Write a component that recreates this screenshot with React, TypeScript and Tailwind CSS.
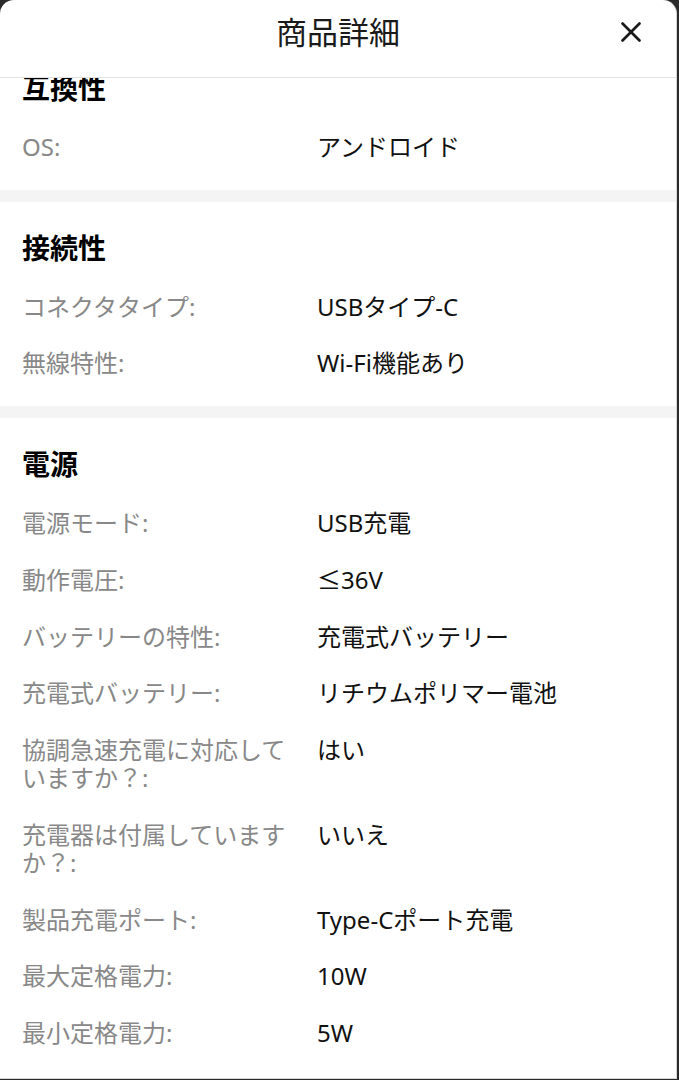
import { X } from "lucide-react";

type Row = { label: string; value: string };
type Section = { title: string; rows: Row[] };

const sections: Section[] = [
  { title: "互換性", rows: [{ label: "OS:", value: "アンドロイド" }] },
  {
    title: "接続性",
    rows: [
      { label: "コネクタタイプ:", value: "USBタイプ-C" },
      { label: "無線特性:", value: "Wi-Fi機能あり" },
    ],
  },
  {
    title: "電源",
    rows: [
      { label: "電源モード:", value: "USB充電" },
      { label: "動作電圧:", value: "≤36V" },
      { label: "バッテリーの特性:", value: "充電式バッテリー" },
      { label: "充電式バッテリー:", value: "リチウムポリマー電池" },
      { label: "協調急速充電に対応していますか？:", value: "はい" },
      { label: "充電器は付属していますか？:", value: "いいえ" },
      { label: "製品充電ポート:", value: "Type-Cポート充電" },
      { label: "最大定格電力:", value: "10W" },
      { label: "最小定格電力:", value: "5W" },
    ],
  },
];

export default function App() {
  return (
    <div
      className="h-[1080px] bg-[#2a2a2a] flex"
      style={{ fontFamily: '"Noto Sans", "Noto Sans CJK JP", sans-serif' }}
    >
      <div className="w-[677px] h-[1079px] bg-white rounded-t-[14px] border-r border-b border-[#d6d6d6] flex flex-col overflow-hidden">
        {/* header */}
        <div className="relative h-[78px] shrink-0 border-b border-[#e2e2e2] flex items-center justify-center">
          <h1 className="text-[31px] text-[#1a1a1a] -mt-[12px]">商品詳細</h1>
          <button className="absolute right-[28px] top-[15px] text-[#1a1a1a]">
            <X size={34} strokeWidth={1.9} />
          </button>
        </div>

        {/* scrolled content */}
        <div className="flex-1 overflow-hidden">
          <div className="-mt-[36px] flex flex-col gap-[12px] bg-[#f4f4f4]">
            {sections.map(s => (
              <div key={s.title} className="bg-white px-[22px] pt-[30px] pb-[29px] flex flex-col gap-[28.75px]">
                <h2 className="text-[28px] leading-[32px] font-bold text-black">{s.title}</h2>
                {s.rows.map(r => (
                  <div key={r.label} className="flex text-[24px] leading-[28px]">
                    <div className="w-[272px] shrink-0 text-[#888888]">{r.label}</div>
                    <div className="ml-[23px] text-[#111111]">{r.value}</div>
                  </div>
                ))}
              </div>
            ))}
          </div>
        </div>
      </div>
    </div>
  );
}
